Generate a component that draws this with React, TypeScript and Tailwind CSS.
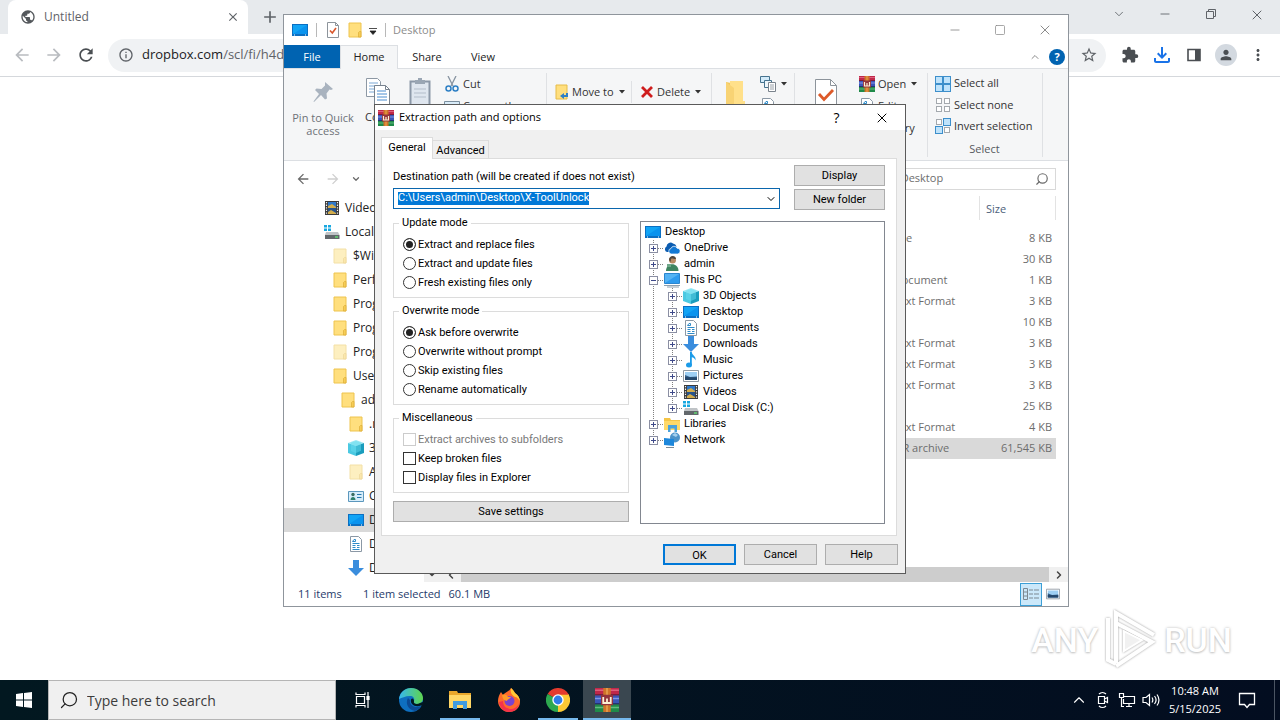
import type { ReactNode } from "react";
import { useState } from "react";
import { ChevronDown, ChevronUp, Minus, Search, Square, X } from "lucide-react";
import {
  MdAdd,
  MdArrowBack,
  MdArrowForward,
  MdClose,
  MdExtension,
  MdInfoOutline,
  MdMoreVert,
  MdOutlineFileDownload,
  MdPerson,
  MdPublic,
  MdRefresh,
  MdStarBorder,
} from "react-icons/md";

type IconName =
  | "screen"
  | "folder"
  | "folderFaded"
  | "video"
  | "disk"
  | "cube"
  | "contact"
  | "document"
  | "download"
  | "music"
  | "picture"
  | "cloud"
  | "user"
  | "pc"
  | "libraries"
  | "network"
  | "winrar"
  | "properties";

const ICONS: Record<IconName, ReactNode> = {
  screen: (
    <>
      <path d="M0 2h16v12H0z" fill="#0b6fc2" />
      <path d="M1 3h14v9H1z" fill="#12a4f5" />
      <path d="M1 12L15 3v9z" fill="#0a93ee" />
      <path d="M2 13h1M13 13h1" stroke="#fff" />
    </>
  ),
  folder: (
    <>
      <path d="M2 1h12v14H2z" fill="#ffdf7e" stroke="#eec44f" />
      <path d="M11.500 15V10.500l1-1h1.500V15z" fill="#f6cd55" stroke="#dcae3a" strokeWidth=".7" />
    </>
  ),
  folderFaded: (
    <>
      <path d="M2 1h12v14H2z" fill="#fdefc0" stroke="#f3e0a6" />
      <path d="M11.500 15V10.500l1-1h1.500V15z" fill="#fbe7ac" stroke="#ecd79b" strokeWidth=".7" />
    </>
  ),
  video: (
    <>
      <path d="M1 1h14v14H1z" fill="#3b3b3b" />
      <path d="M4 2h8v6H4z" fill="#2f78c9" />
      <path d="M4 8h8v6H4z" fill="#27538c" />
      <path d="M4 6l4-2 4 3v1H4zM4 12l3-2 5 3v1H4z" fill="#d3ad4c" />
      <path d="M2.500 2v13M13.500 2v13" stroke="#f2f2f2" strokeWidth="1.200" strokeDasharray="1.300 1.300" />
    </>
  ),
  disk: (
    <>
      <path d="M0 1h3v2.500H0zM4 1h3v2.500H4zM0 4.500h3V7H0zM4 4.500h3V7H4z" fill="#19a8e0" />
      <path d="M2 8h12l1.500 3H1z" fill="#bfc3c6" />
      <path d="M1 11h14.500v4H1z" fill="#62676b" />
      <path d="M11 13h3" stroke="#5ff072" strokeWidth="1.200" />
    </>
  ),
  cube: (
    <>
      <path d="M8 0l8 3-8 3-8-3z" fill="#9be9f5" />
      <path d="M0 3l8 3v10l-8-3z" fill="#4bc9e2" />
      <path d="M16 3L8 6v10l8-3z" fill="#1a9dbd" />
      <path d="M3 2.800L8 1l5 1.800v8L8 13l-5-2z" fill="#68dbee" opacity=".5" />
    </>
  ),
  contact: (
    <>
      <path d="M.5 3.500h15v10H.5z" fill="#d7edfa" stroke="#5b97bd" />
      <circle cx="5" cy="6.500" r="1.700" fill="#3a6c60" />
      <path d="M2.500 12c0-4 5-4 5 0z" fill="#2f7f6c" />
      <path d="M9 6.500h4.500M9 9.500h4.500" stroke="#2878ad" />
    </>
  ),
  document: (
    <>
      <path d="M2.500.5h8l3 3v12h-11z" fill="#fff" stroke="#8b98a5" />
      <path d="M4.500 5.500l1.500-2h1.500v2zM4.500 7.500h7M4.500 9.500h3M9 9.500h2.500M4.500 11.500h3M9 11.500h2.500M4.500 13.500h7" stroke="#2f8bc9" fill="none" />
    </>
  ),
  download: <path d="M5 0h6v8h5l-8 8-8-8h5z" fill="#3a8ddd" />,
  music: (
    <>
      <path d="M7 0h1.800c.2 3.500 4.700 4 3.700 8.500-.6-2-2-3-3.700-3.300V13H7z" fill="#1b9be8" />
      <ellipse cx="6" cy="13" rx="3" ry="2.500" fill="#1b9be8" />
    </>
  ),
  picture: (
    <>
      <path d="M.5 2.500h15v11H.5z" fill="#fff" stroke="#9099a2" />
      <path d="M2 4h12v8H2z" fill="#9ecff3" />
      <path d="M2 7l5 2 7-.5V12H2z" fill="#35618b" />
      <path d="M2 9l12 .5V12H2z" fill="#24476b" />
    </>
  ),
  cloud: (
    <>
      <path d="M3 12A3 3 0 0 1 2.500 6.500 4 4 0 0 1 9 3.500a4 4 0 0 1 3.500 3L6 12z" fill="#0b5cb0" />
      <path d="M7 14a2.800 2.800 0 0 1 0-5.500 3.200 3.200 0 0 1 6-.3A2.900 2.900 0 0 1 13.500 14z" fill="#1479d4" stroke="#fff" strokeWidth=".7" />
    </>
  ),
  user: (
    <>
      <circle cx="8.500" cy="4" r="3.500" fill="#b98a62" />
      <path d="M5 4c0-5 7-5 7-1-3 0-4-1-5 0l-.5 3z" fill="#51463c" />
      <path d="M2 15c0-9 12.500-9 12.500 0z" fill="#3f8560" />
      <path d="M3 8h4v3H3z" fill="#70a98a" />
    </>
  ),
  pc: (
    <>
      <path d="M.5 1.500h15v10H.5z" fill="#53b3f4" stroke="#2a85cf" />
      <path d="M1 11L15 2v9z" fill="#2e9bee" />
      <path d="M3 15h12M0 13.500h16" stroke="#8fa0ae" />
    </>
  ),
  libraries: (
    <>
      <path d="M0 2h6l1 2h9v10H0z" fill="#f5c546" />
      <path d="M0 5h16v9H0z" fill="#ffd968" />
      <path d="M4 16V9h9v7h-2.500v-3.500h-4V16z" fill="#4ba3dc" />
    </>
  ),
  network: (
    <>
      <circle cx="11" cy="5.500" r="5" fill="#4c93c9" />
      <path d="M8 3l3-2 3 2-2 2-2-1z" fill="#a3d0ee" />
      <path d="M0 6l10 1v7L0 13z" fill="#1d87db" />
      <path d="M2 15.500h8" stroke="#7c8a96" />
    </>
  ),
  winrar: (
    <>
      <path d="M0 0h16v5H0z" fill="#c0284a" />
      <path d="M0 1h16v1H0z" fill="#de5f7c" />
      <path d="M0 4h16v1H0z" fill="#7c1b3a" />
      <path d="M0 5h16v5.500H0z" fill="#3a55b8" />
      <path d="M0 6.500h16v1H0z" fill="#8296e6" />
      <path d="M0 10h16v1H0z" fill="#243374" />
      <path d="M0 11h16v5H0z" fill="#1f8a49" />
      <path d="M0 12.500h16v1H0z" fill="#62bb80" />
      <path d="M5.500 0h5v16h-5z" fill="#cf7429" />
      <path d="M7.500 0h1v16h-1z" fill="#e9a552" />
      <path d="M4 4.500h8v7H4z" fill="#93343c" />
      <path d="M5.500 6v4h5V6M8 7v3" stroke="#fdf0d2" fill="none" strokeWidth="1.200" />
    </>
  ),
  properties: (
    <>
      <path d="M2.500.5h8l3 3v12h-11z" fill="#fff" stroke="#8d949b" />
      <path d="M10.500.5v3h3" fill="none" stroke="#8d949b" />
      <path d="M5 8.500l2.300 2.500L11 6" fill="none" stroke="#d9572c" strokeWidth="1.600" />
    </>
  ),
};

function Icon({ name, className = "size-4" }: { name: IconName; className?: string }) {
  return (
    <svg viewBox="0 0 16 16" className={`shrink-0 ${className}`} aria-hidden="true">
      {ICONS[name]}
    </svg>
  );
}

function Caret() {
  return (
    <svg viewBox="0 0 6 4" className="h-1 w-1.5 shrink-0" aria-hidden="true">
      <path d="M0 0h6L3 3.500z" fill="#333" />
    </svg>
  );
}

function SelectGridIcon({ filled }: { filled: boolean[] }) {
  return (
    <svg viewBox="0 0 16 16" className="size-4 shrink-0" aria-hidden="true">
      {filled.map((on, index) => {
        const x = (index % 2) * 8;
        const y = Math.floor(index / 2) * 8;
        return (
          <rect
            key={index}
            x={on ? x + 0.5 : x + 1.5}
            y={on ? y + 0.5 : y + 1.5}
            width={on ? 7 : 5}
            height={on ? 7 : 5}
            fill={on ? "#bfe3fb" : "#fff"}
            stroke={on ? "#3d8fcb" : "#a4a9ae"}
          />
        );
      })}
    </svg>
  );
}

function BrowserWindow() {
  return (
    <section className="flex flex-1 flex-col bg-white" aria-label="Browser">
      <div className="flex h-[34px] bg-[#e7eaed] pl-2">
        <div className="flex w-60 items-center rounded-t-lg bg-white pr-1 pl-3">
          <MdPublic className="size-4 text-[#54585c]" />
          <span className="ml-2 flex-1 text-xs text-[#5f6368]">Untitled</span>
          <button aria-label="Close tab" className="p-1">
            <MdClose className="size-3.5 text-[#5f6368]" />
          </button>
        </div>
        <button aria-label="New tab" className="ml-3">
          <MdAdd className="size-5 text-[#5f6368]" />
        </button>
        <div className="ml-auto flex items-start pt-[7px] text-[#5f6368]">
          <button aria-label="Search tabs" className="flex w-[46px] justify-center">
            <ChevronDown className="size-3.5" strokeWidth={1.5} />
          </button>
          <button aria-label="Minimize" className="flex w-[46px] justify-center">
            <Minus className="size-3.5" strokeWidth={1.5} />
          </button>
          <button aria-label="Restore" className="flex w-[46px] justify-center">
            <svg viewBox="0 0 14 14" className="size-3.5" fill="none" stroke="currentColor">
              <path d="M2.500 4.500h7v7h-7zM4.500 4V2.500h7v7H10" />
            </svg>
          </button>
          <button aria-label="Close" className="flex w-[46px] justify-center">
            <X className="size-4" strokeWidth={1.5} />
          </button>
        </div>
      </div>
      <div className="flex h-[43px] items-center border-b border-[#d5d8dc] pr-1.5">
        <div className="flex w-[108px] gap-3 pl-3">
          <button aria-label="Back">
            <MdArrowBack className="size-5 text-[#b9bcc0]" />
          </button>
          <button aria-label="Forward">
            <MdArrowForward className="size-5 text-[#b9bcc0]" />
          </button>
          <button aria-label="Reload">
            <MdRefresh className="size-5 text-[#4a4e52]" />
          </button>
        </div>
        <div className="flex h-[33px] flex-1 items-center rounded-full bg-[#f0f2f4] pr-2 pl-2.5">
          <MdInfoOutline className="size-4 text-[#5f6368]" />
          <span className="ml-2 text-[13px] text-[#5f6368]">
            <span className="text-[#202124]">dropbox.com</span>/scl/fi/h4d
          </span>
          <button aria-label="Bookmark" className="ml-auto">
            <MdStarBorder className="size-[18px] text-[#5f6368]" />
          </button>
        </div>
        <div className="ml-2 flex text-[#4a4e52]">
          <button aria-label="Extensions" className="flex size-8 items-center justify-center">
            <MdExtension className="size-[18px]" />
          </button>
          <button aria-label="Downloads" className="flex size-8 items-center justify-center">
            <MdOutlineFileDownload className="size-6 text-[#1a73e8]" />
          </button>
          <button aria-label="Side panel" className="flex size-8 items-center justify-center">
            <svg viewBox="0 0 16 16" className="size-4">
              <path d="M2 2.500h12v11H2z" fill="none" stroke="currentColor" strokeWidth="1.600" />
              <path d="M9 3h5v10H9z" fill="currentColor" />
            </svg>
          </button>
          <button aria-label="Profile" className="flex size-8 items-center justify-center">
            <span className="flex size-[22px] items-center justify-center rounded-full bg-[#d3d9e0]">
              <MdPerson className="size-4" />
            </span>
          </button>
          <button aria-label="Menu" className="flex size-8 items-center justify-center">
            <MdMoreVert className="size-[18px]" />
          </button>
        </div>
      </div>
      <div className="flex flex-1 items-end justify-end pr-12 pb-2">
        <Watermark />
      </div>
    </section>
  );
}

function Watermark() {
  return (
    <div className="flex items-center gap-1 font-['Roboto','Liberation_Sans',sans-serif] text-[34px] leading-[64px] font-medium text-white [text-shadow:0_0_3px_#bdbdbd,0_1px_2px_#cfcfcf]">
      <span>ANY</span>
      <svg viewBox="0 0 58 64" className="h-16 w-[58px] drop-shadow-[0_0_1px_#9a9a9a]" fill="none" stroke="#fff" strokeWidth="4" aria-hidden="true">
        <path d="M6 10v42l8 4" />
        <path d="M52 27L14 5v50" />
        <path d="M14 15l36 19-36 24" />
        <path d="M22 23v20l18-11z" fill="#f1f1f1" strokeWidth="2" />
      </svg>
      <span>RUN</span>
    </div>
  );
}

interface NavEntry {
  icon: IconName;
  label: string;
  indent: string;
  selected?: boolean;
}

const NAV_ENTRIES: NavEntry[] = [
  { icon: "video", label: "Videos", indent: "pl-10" },
  { icon: "disk", label: "Local Disk (C:)", indent: "pl-10" },
  { icon: "folderFaded", label: "$WinREAgent", indent: "pl-12" },
  { icon: "folder", label: "PerfLogs", indent: "pl-12" },
  { icon: "folder", label: "Program Files", indent: "pl-12" },
  { icon: "folder", label: "Program Files", indent: "pl-12" },
  { icon: "folderFaded", label: "ProgramData", indent: "pl-12" },
  { icon: "folder", label: "Users", indent: "pl-12" },
  { icon: "folder", label: "admin", indent: "pl-14" },
  { icon: "folder", label: ".ms-ad", indent: "pl-16" },
  { icon: "cube", label: "3D Objects", indent: "pl-16" },
  { icon: "folderFaded", label: "AppData", indent: "pl-16" },
  { icon: "contact", label: "Contacts", indent: "pl-16" },
  { icon: "screen", label: "Desktop", indent: "pl-16", selected: true },
  { icon: "document", label: "Documents", indent: "pl-16" },
  { icon: "download", label: "Downloads", indent: "pl-16" },
];

const FILES = [
  { type: "PNG File", size: "8 KB" },
  { type: "File", size: "30 KB" },
  { type: "Text Document", size: "1 KB" },
  { type: "Rich Text Format", size: "3 KB" },
  { type: "File", size: "10 KB" },
  { type: "Rich Text Format", size: "3 KB" },
  { type: "Rich Text Format", size: "3 KB" },
  { type: "Rich Text Format", size: "3 KB" },
  { type: "File", size: "25 KB" },
  { type: "Rich Text Format", size: "4 KB" },
  { type: "WinRAR archive", size: "61,545 KB", selected: true },
];

function RibbonRow({ icon, label, caret }: { icon: ReactNode; label: string; caret?: boolean }) {
  return (
    <button className="flex h-[22px] items-center gap-[3px] whitespace-nowrap">
      {icon}
      {label}
      {caret && (
        <span className="ml-0.5">
          <Caret />
        </span>
      )}
    </button>
  );
}

function Ribbon() {
  return (
    <div className="flex h-[93px] border-y border-[#dcdfe3] bg-[#f5f6f7] pt-1 pb-[3px] text-[#333]">
      <div className="flex w-[263px] border-r border-[#dfe1e4]">
        <button className="flex w-[78px] flex-col items-center leading-[13px] text-[#6e7278]">
          <svg viewBox="0 0 24 24" className="mt-[7px] mb-[7px] size-6" aria-hidden="true">
            <path d="M14 2l8 7-2 1-1.500-.5-3 4 .5 5-2 1-4-4.500L3 22l-.5-.5L8 14 4 10l1.500-1.500 5 .5L14 5.500z" fill="#a9b3bf" />
          </svg>
          Pin to Quick
          <br />
          access
        </button>
        <button className="flex w-8 flex-col items-center">
          <svg viewBox="0 0 26 28" className="mt-1 mb-1 h-7 w-[26px]" aria-hidden="true">
            <path d="M1.500 1.500h11l3 3v15h-14z" fill="#fff" stroke="#8d98a4" />
            <path d="M4 6h9M4 9h9M4 12h9M4 15h5" stroke="#7aa7d4" />
            <path d="M9.500 8.500h11l4 4v15h-15z" fill="#fff" stroke="#77828e" />
            <path d="M20.500 8.500v4h4" fill="none" stroke="#77828e" />
            <path d="M12 14h9M12 17h10M12 20h10M12 23h10" stroke="#4a8dd0" />
          </svg>
          Copy
        </button>
        <button aria-label="Paste" className="flex w-[52px] justify-center">
          <svg viewBox="0 0 22 30" className="mt-1 h-[30px] w-[22px]" aria-hidden="true">
            <path d="M1.500 4.500h19v25h-19z" fill="#dfe6ef" stroke="#8c98a8" strokeWidth="2" />
            <path d="M6 3h3V1h4v2h3v4H6z" fill="#9aa6b4" />
            <path d="M5 12h12M5 16h12M5 20h12" stroke="#b3bdca" />
          </svg>
        </button>
        <div className="-ml-0.5 flex flex-col">
          <RibbonRow
            label="Cut"
            icon={
              <svg viewBox="0 0 16 16" className="size-4" fill="none" aria-hidden="true">
                <path d="M4 0l5 10M12 0L7 10" stroke="#8793a0" strokeWidth="1.300" />
                <circle cx="4.500" cy="12.500" r="2.500" stroke="#2d7fc4" strokeWidth="1.500" />
                <circle cx="11.500" cy="12.500" r="2.500" stroke="#2d7fc4" strokeWidth="1.500" />
              </svg>
            }
          />
          <RibbonRow
            label="Copy path"
            icon={
              <svg viewBox="0 0 16 16" className="size-4" aria-hidden="true">
                <path d="M.5 3.500h15v9H.5z" fill="#d9ecf9" stroke="#7b8f9f" />
                <path d="M3 8h8" stroke="#3b82bd" />
              </svg>
            }
          />
        </div>
      </div>
      <div className="flex w-[165px] items-start border-r border-[#dfe1e4] pt-2">
        <div className="flex w-[85px] justify-between border-r border-[#dfe1e4] pl-2">
          <RibbonRow
            label="Move to"
            caret
            icon={
              <svg viewBox="0 0 14 16" className="h-4 w-3.5" aria-hidden="true">
                <path d="M1 1h11v14H1z" fill="#ffdf7e" stroke="#e6bc48" />
                <path d="M13 9v4H9v2l-4-3 4-3v2h2V9z" fill="#2f80c8" />
              </svg>
            }
          />
        </div>
        <div className="pl-2">
          <RibbonRow
            label="Delete"
            caret
            icon={
              <svg viewBox="0 0 14 14" className="size-3.5" aria-hidden="true">
                <path d="M2 2l10 10M12 2L2 12" stroke="#cf1d1d" strokeWidth="2.800" />
              </svg>
            }
          />
        </div>
      </div>
      <div className="flex w-[83px] items-start gap-[14px] border-r border-[#dfe1e4] pl-3">
        <svg viewBox="0 0 22 30" className="mt-1.5 h-[30px] w-[22px]" aria-hidden="true">
          <path d="M2 3l10 2v25H2z" fill="#f3c95c" />
          <path d="M6 2h13v20h2v8H6z" fill="#ffe08a" />
          <path d="M2 3l8 6v21H2z" fill="#f8d374" />
        </svg>
        <div className="flex flex-col">
          <RibbonRow
            label=""
            caret
            icon={
              <svg viewBox="0 0 16 16" className="size-4" aria-hidden="true">
                <path d="M.5.5h9v6h-9z" fill="#d3ebfa" stroke="#46738f" />
                <path d="M4.500 4.500h7v7h-7z" fill="#eef6fb" stroke="#46738f" />
                <path d="M8.500 6.500h7v9h-7z" fill="#fff" stroke="#7a838c" />
                <path d="M10 9h4M10 11h4M10 13h4" stroke="#9aa2aa" />
              </svg>
            }
          />
          <RibbonRow label="" caret icon={<Icon name="document" />} />
        </div>
      </div>
      <div className="flex w-[133px] items-start border-r border-[#dfe1e4]">
        <svg viewBox="0 0 22 30" className="mt-1.5 ml-5 h-[30px] w-[22px]" aria-hidden="true">
          <path d="M.5.5h15l6 6v23H.5z" fill="#fff" stroke="#8d949b" />
          <path d="M15.500.5v6h6" fill="none" stroke="#8d949b" />
          <path d="M4 15l5 5.500L18 11" fill="none" stroke="#dd5a29" strokeWidth="2.800" />
        </svg>
        <div className="ml-[22px] flex flex-col">
          <RibbonRow label="Open" caret icon={<Icon name="winrar" />} />
          <RibbonRow label="Edit" icon={<Icon name="document" />} />
          <RibbonRow label="History" icon={<Icon name="document" />} />
        </div>
      </div>
      <div className="flex w-[115px] flex-col border-r border-[#dfe1e4] pl-[7px]">
        <RibbonRow label="Select all" icon={<SelectGridIcon filled={[true, true, true, true]} />} />
        <RibbonRow label="Select none" icon={<SelectGridIcon filled={[false, false, false, false]} />} />
        <RibbonRow label="Invert selection" icon={<SelectGridIcon filled={[false, true, true, false]} />} />
        <span className="mt-1 pr-2 text-center leading-4 text-[#55595e]">Select</span>
      </div>
    </div>
  );
}

function FileTable() {
  return (
    <table className="ml-1 w-[calc(100%-16px)] table-fixed border-collapse text-left text-[#6d6d6d]">
      <thead>
        <tr className="h-8 align-top text-[#4c607a]">
          <th className="font-normal" aria-label="Name" />
          <th className="w-40 font-normal" aria-label="Date modified" />
          <th className="w-[110px] font-normal" aria-label="Type" />
          <th className="w-[77px] font-normal">
            <div className="h-6 border-x border-[#e3e3e3] pl-1.5 leading-[26px]">Size</div>
          </th>
        </tr>
      </thead>
      <tbody>
        {FILES.map((file, index) => (
          <tr key={index} className={file.selected ? "h-[21px] bg-[#d9d9d9]" : "h-[21px]"}>
            <td />
            <td />
            <td className="p-0 whitespace-nowrap">{file.type}</td>
            <td className="p-0 pr-1 text-right whitespace-nowrap">{file.size}</td>
          </tr>
        ))}
      </tbody>
    </table>
  );
}

function ExplorerWindow() {
  return (
    <section
      className="absolute top-3.5 left-[283px] flex w-[786px] flex-col border border-[#8f959c] bg-white text-[11px] text-[#222]"
      aria-label="File Explorer"
    >
      <header className="flex h-[30px] items-center pl-2 text-[#8b8b8b]">
        <Icon name="screen" />
        <span className="ml-2 h-3.5 border-l border-[#b8b8b8]" />
        <Icon name="properties" className="ml-2 size-4" />
        <Icon name="folder" className="ml-1.5 size-4" />
        <svg viewBox="0 0 8 8" className="mt-1 ml-1.5 size-2" aria-hidden="true">
          <path d="M0 .5h8M1 3h6L4 6.500z" fill="#222" stroke="#222" strokeWidth=".8" />
        </svg>
        <span className="ml-2 h-3.5 border-l border-[#b8b8b8]" />
        <h1 className="ml-[7px] flex-1 font-normal">Desktop</h1>
        <button aria-label="Minimize" className="flex w-[45px] justify-center">
          <Minus className="size-3.5" strokeWidth={1.5} />
        </button>
        <button aria-label="Maximize" className="flex w-[45px] justify-center">
          <Square className="size-3" strokeWidth={1.5} />
        </button>
        <button aria-label="Close" className="flex w-[46px] justify-center">
          <X className="size-4" strokeWidth={1.5} />
        </button>
      </header>
      <nav className="flex h-[23px] items-center">
        <button className="h-full w-14 bg-[#0063b1] pt-px text-white">File</button>
        <button className="relative h-6 w-[58px] self-start border border-b-0 border-[#dcdfe3] bg-[#f5f6f7]">Home</button>
        <button className="w-[58px] pt-px">Share</button>
        <button className="w-[54px] pt-px">View</button>
        <button aria-label="Collapse ribbon" className="ml-auto">
          <ChevronUp className="size-3 text-[#8b8b8b]" strokeWidth={2} />
        </button>
        <button aria-label="Help" className="mr-[3px] ml-2 size-4 rounded-full bg-[#0063b1] text-[11px] leading-4 font-bold text-white">
          ?
        </button>
      </nav>
      <Ribbon />
      <div className="flex h-[35px] items-center pr-3 pl-[11px] text-[#6a6a6a]">
        <button aria-label="Back">
          <MdArrowBack className="size-4" />
        </button>
        <button aria-label="Forward" className="ml-3.5">
          <MdArrowForward className="size-4 text-[#cfcfcf]" />
        </button>
        <button aria-label="Recent locations" className="ml-2.5">
          <ChevronDown className="size-2.5" strokeWidth={3} />
        </button>
        <button aria-label="Up" className="ml-2.5">
          <MdArrowBack className="size-4 rotate-90" />
        </button>
        <label className="ml-auto flex h-[22px] w-[218px] items-center border border-[#d9d9d9] pr-1.5 pl-6">
          <input
            aria-label="Search Desktop"
            placeholder="Search Desktop"
            className="min-w-0 flex-1 outline-none placeholder:text-[#6d6d6d]"
          />
          <Search className="size-3.5 -scale-x-100" strokeWidth={2} />
        </label>
      </div>
      <div className="flex h-[386px]">
        <ul className="w-[140px] overflow-hidden">
          {NAV_ENTRIES.map((entry, index) => (
            <li
              key={index}
              className={[
                "flex h-6 items-center gap-[5px] text-xs whitespace-nowrap",
                entry.indent,
                entry.selected ? "bg-[#d9d9d9]" : "",
              ].join(" ")}
            >
              <Icon name={entry.icon} />
              {entry.label}
            </li>
          ))}
        </ul>
        <div className="flex w-4 items-end justify-center bg-[#f0f0f0] pb-0.5">
          <ChevronDown className="size-3 text-[#444]" strokeWidth={3} />
        </div>
        <div className="flex flex-1 flex-col">
          <FileTable />
          <div className="mt-auto flex h-[15px] items-center bg-[#f0f0f0]">
            <button aria-label="Scroll left" className="flex w-[21px] justify-center">
              <ChevronDown className="size-3 rotate-90 text-[#444]" strokeWidth={3} />
            </button>
            <span className="h-full flex-1 bg-[#cdcdcd]" />
            <button aria-label="Scroll right" className="flex w-[19px] justify-center">
              <ChevronDown className="size-3 -rotate-90 text-[#444]" strokeWidth={3} />
            </button>
          </div>
        </div>
      </div>
      <footer className="flex h-6 items-center pr-2 pl-3.5 text-[#1e3a6a]">
        <span className="w-[65px]">11 items</span>
        <span>1 item selected</span>
        <span className="ml-2">60.1 MB</span>
        <button aria-label="Details view" className="ml-auto flex h-[23px] w-[22px] items-center justify-center border border-[#3c9fd6] bg-[#cbe8fa]">
          <svg viewBox="0 0 16 14" className="h-3.5 w-4" fill="none" aria-hidden="true">
            <path d="M.5 1.500h4v11h-4zM.5 5h4M.5 9h4" stroke="#7d8891" />
            <path d="M6 3h4M6 7h4M6 11h4M11 3h5M11 7h5M11 11h5" stroke="#7d8891" />
          </svg>
        </button>
        <button aria-label="Large icons view" className="ml-1">
          <Icon name="picture" className="size-3.5" />
        </button>
      </footer>
    </section>
  );
}

interface TreeEntry {
  icon: IconName;
  label: string;
  depth: number;
  open?: boolean;
  last?: boolean;
}

const TREE: TreeEntry[] = [
  { icon: "cloud", label: "OneDrive", depth: 1 },
  { icon: "user", label: "admin", depth: 1 },
  { icon: "pc", label: "This PC", depth: 1, open: true },
  { icon: "cube", label: "3D Objects", depth: 2 },
  { icon: "screen", label: "Desktop", depth: 2 },
  { icon: "document", label: "Documents", depth: 2 },
  { icon: "download", label: "Downloads", depth: 2 },
  { icon: "music", label: "Music", depth: 2 },
  { icon: "picture", label: "Pictures", depth: 2 },
  { icon: "video", label: "Videos", depth: 2 },
  { icon: "disk", label: "Local Disk (C:)", depth: 2, last: true },
  { icon: "libraries", label: "Libraries", depth: 1 },
  { icon: "network", label: "Network", depth: 1, last: true },
];

function TreeBranch({ node, open, last }: { node?: boolean; open?: boolean; last?: boolean }) {
  return (
    <svg viewBox="0 0 19 16" className="h-4 w-[19px] shrink-0" fill="none" aria-hidden="true">
      <path d={last ? "M8.500 0v8" : "M8.500 0v16"} stroke="#808080" strokeDasharray="1 1" />
      {node && (
        <>
          <path d="M9 8.500h10" stroke="#808080" strokeDasharray="1 1" />
          <rect x="4.500" y="4.500" width="8" height="8" fill="#fff" stroke="#8b8fa3" />
          <path d={open ? "M6 8.500h5" : "M6 8.500h5M8.500 6v5"} stroke="#3f4a8a" />
        </>
      )}
    </svg>
  );
}

function FolderTree() {
  return (
    <ul className="flex-1 border border-[#828790] bg-white py-0.5 pl-1">
      <li className="flex h-4 items-center gap-1">
        <Icon name="screen" />
        Desktop
      </li>
      {TREE.map((entry, index) => (
        <li key={index} className="flex h-4 items-center">
          {entry.depth === 2 && <TreeBranch />}
          <TreeBranch node open={entry.open} last={entry.last} />
          <Icon name={entry.icon} />
          <span className="ml-1">{entry.label}</span>
        </li>
      ))}
    </ul>
  );
}

function OptionGroup({ title, children }: { title: string; children: ReactNode }) {
  return (
    <fieldset className="border border-[#dcdcdc] pb-1 pl-[9px]">
      <legend className="-ml-1 px-[3px] leading-[14px]">{title}</legend>
      <div className="flex flex-col pt-[5px] pb-px">{children}</div>
    </fieldset>
  );
}

function RadioGroup({ title, name, options }: { title: string; name: string; options: string[] }) {
  const [selected, setSelected] = useState(options[0]);

  return (
    <OptionGroup title={title}>
      {options.map((option) => (
        <label key={option} className="flex h-[19px] items-center gap-0.5">
          <input
            type="radio"
            name={name}
            checked={selected === option}
            onChange={() => setSelected(option)}
            className="size-[13px] appearance-none rounded-full border border-[#333] bg-white checked:bg-[#222] checked:shadow-[inset_0_0_0_2px_#fff]"
          />
          <span className="pt-0.5">{option}</span>
        </label>
      ))}
    </OptionGroup>
  );
}

function CheckOption({ label, disabled }: { label: string; disabled?: boolean }) {
  return (
    <label className={disabled ? "flex h-[19px] items-center gap-0.5 text-[#7a7a7a]" : "flex h-[19px] items-center gap-0.5"}>
      <input
        type="checkbox"
        disabled={disabled}
        className="size-[13px] appearance-none border border-[#333] bg-white checked:bg-[#333] disabled:border-[#cccccc]"
      />
      <span className="pt-0.5">{label}</span>
    </label>
  );
}

function PushButton({ children, className = "" }: { children: ReactNode; className?: string }) {
  return (
    <button className={`h-[21px] border border-[#adadad] bg-[#e1e1e1] pt-0.5 ${className}`}>{children}</button>
  );
}

function ExtractionDialog() {
  return (
    <section
      role="dialog"
      aria-label="Extraction path and options"
      className="absolute top-[104px] left-[374px] flex w-[532px] flex-col border border-[#5a5a5a] bg-[#f0f0f0] font-['Roboto','Liberation_Sans',sans-serif] text-[11px] text-black"
    >
      <header className="flex h-[25px] items-center bg-white pl-[3px] font-['Open_Sans','Noto_Sans',sans-serif]">
        <Icon name="winrar" />
        <h2 className="ml-[5px] flex-1">Extraction path and options</h2>
        <button aria-label="Help" className="w-[45px] text-sm">
          ?
        </button>
        <button aria-label="Close" className="flex w-[46px] justify-center">
          <X className="size-4" strokeWidth={1.5} />
        </button>
      </header>
      <div className="flex flex-col px-1.5 pt-[7px] pb-2">
        <div role="tablist" className="flex items-end">
          <button role="tab" aria-selected="true" className="relative -mb-px h-[22px] w-[52px] border border-b-0 border-[#dcdcdc] bg-white">
            General
          </button>
          <button role="tab" aria-selected="false" className="h-[18px] w-14 border border-b-0 border-l-0 border-[#dcdcdc] pt-0.5">
            Advanced
          </button>
        </div>
        <div className="mr-0.5 flex flex-col border border-[#dcdcdc] bg-white px-[11px] pt-1.5 pb-[11px]">
          <div className="flex gap-3.5">
            <div className="flex flex-1 flex-col">
              <label htmlFor="destination" className="pt-0.5 pb-0.5 leading-[19px]">
                Destination path (will be created if does not exist)
              </label>
              <div className="flex h-[21px] items-center border border-[#0a66ad] pr-0.5 pl-1">
                <input
                  id="destination"
                  defaultValue="C:\Users\admin\Desktop\X-ToolUnlock"
                  className="h-[13px] [field-sizing:content] bg-[#0078d7] text-white outline-none"
                />
                <button aria-label="Show recent paths" className="ml-auto">
                  <ChevronDown className="size-3" strokeWidth={2} />
                </button>
              </div>
            </div>
            <div className="flex w-[91px] flex-col gap-[3px]">
              <PushButton>Display</PushButton>
              <PushButton>New folder</PushButton>
            </div>
          </div>
          <div className="mt-1.5 flex gap-[11px]">
            <div className="flex w-[236px] flex-col gap-1.5 pb-0.5">
              <RadioGroup
                title="Update mode"
                name="update"
                options={["Extract and replace files", "Extract and update files", "Fresh existing files only"]}
              />
              <RadioGroup
                title="Overwrite mode"
                name="overwrite"
                options={["Ask before overwrite", "Overwrite without prompt", "Skip existing files", "Rename automatically"]}
              />
              <OptionGroup title="Miscellaneous">
                <CheckOption label="Extract archives to subfolders" disabled />
                <CheckOption label="Keep broken files" />
                <CheckOption label="Display files in Explorer" />
              </OptionGroup>
              <PushButton className="mt-0.5">Save settings</PushButton>
            </div>
            <div className="flex flex-1 pt-[5px]">
              <FolderTree />
            </div>
          </div>
        </div>
        <div className="mt-2 flex justify-end gap-2 pr-px">
          <button className="h-[21px] w-[73px] border-2 border-[#0078d7] bg-[#e1e1e1] pt-0.5">OK</button>
          <PushButton className="w-[73px]">Cancel</PushButton>
          <PushButton className="w-[73px]">Help</PushButton>
        </div>
      </div>
    </section>
  );
}

function TaskbarApp({ label, running, active, children }: { label: string; running?: boolean; active?: boolean; children: ReactNode }) {
  return (
    <button
      aria-label={label}
      className={[
        "flex h-full w-12 flex-col items-center justify-center pt-0.5",
        active ? "bg-[#3a4750]" : "",
      ].join(" ")}
    >
      <span className="flex flex-1 items-center">{children}</span>
      <span
        className={[
          "h-0.5",
          active ? "w-full" : "w-10",
          running ? "bg-[#76b9ed]" : "",
        ].join(" ")}
      />
    </button>
  );
}

function Taskbar() {
  return (
    <footer className="flex h-10 items-center bg-linear-to-r from-[#021820] to-[#030d20] text-white">
      <button aria-label="Start" className="flex w-12 justify-center">
        <svg viewBox="0 0 16 16" className="size-4" fill="#fff" aria-hidden="true">
          <path d="M0 2l7-1v6.500H0zM8 1l8-1v7.500H8zM0 8.500h7V15l-7-1zM8 8.500h8V16l-8-1z" />
        </svg>
      </button>
      <label className="flex h-full w-72 items-center border border-[#b5b5b5] bg-[#f0f0f0] px-2.5">
        <Search className="size-5 -scale-x-100 text-[#222]" strokeWidth={1.5} />
        <input
          aria-label="Type here to search"
          placeholder="Type here to search"
          className="ml-2 flex-1 pt-px text-sm outline-none placeholder:text-[#3c3c3c]"
        />
      </label>
      <div className="flex h-full gap-px pl-0.5">
        <TaskbarApp label="Task view">
          <svg viewBox="0 0 18 18" className="size-[18px]" fill="none" stroke="#fff" strokeWidth="1.200" aria-hidden="true">
            <path d="M3.500 5.500h8v7h-8zM3 1.500v2h9v-2M3 16.500v-2h9v2M15 1v16" />
            <path d="M14 5.500h2v3h-2z" fill="#fff" />
          </svg>
        </TaskbarApp>
        <TaskbarApp label="Edge">
          <svg viewBox="0 0 24 24" className="size-6" aria-hidden="true">
            <defs>
              <linearGradient id="edgeTop" x1="0" x2="1">
                <stop offset="0" stopColor="#36b8ef" />
                <stop offset="1" stopColor="#5fd44d" />
              </linearGradient>
            </defs>
            <circle cx="12" cy="12" r="12" fill="#0e6fc0" />
            <path d="M0 11C1 4 6 0 12 0c7 0 12 5 12 10 0 4-3 6-6 6s-4-1-3-3c1-3-1-5-4-5-5 0-8 2-11 3z" fill="url(#edgeTop)" />
            <path d="M9 10c-3 5 0 12 7 13 3-1 5-3 6-5-6 3-12-1-11-6z" fill="#0b4a94" />
            <path d="M15 13c-1 3 3 4 6 2l3-1v4l-2-.5c-6 2-11-1-10-6 1-2 3-1 3 1.500z" fill="#021820" />
          </svg>
        </TaskbarApp>
        <TaskbarApp label="File Explorer" running>
          <svg viewBox="0 0 22 20" className="h-5 w-[22px]" aria-hidden="true">
            <path d="M0 1h8l1 2h13v15H0z" fill="#e9a72b" />
            <path d="M0 5h22v13H0z" fill="#ffd766" />
            <path d="M4 19v-8h14v8h-4v-4H8v4z" fill="#3f9be0" />
          </svg>
        </TaskbarApp>
        <TaskbarApp label="Firefox">
          <svg viewBox="0 0 24 24" className="size-6" aria-hidden="true">
            <path d="M14 0c2 2 3 3 4 5 3 2 5 5 5 9 0 6-5 10-11 10S1 19 1 13c0-3 1-6 3-9l2 3c2-3 6-3 8-7z" fill="#ff6a2b" />
            <path d="M14 0c2 2 3 3 4 5 3 2 5 5 5 9-1-3-3-5-5-5-3-2-5-4-4-9z" fill="#ffc935" />
            <path d="M2 14c1 6 5 10 10 10s9-3 10-8c-3 5-8 6-12 4-3-1-4-4-4-7z" fill="#f5314b" />
            <circle cx="12.500" cy="13" r="5" fill="#7a43cf" />
            <path d="M5 7c3-1 5 0 6 2h3c-1 2-4 2-4 4-2-1-4 0-5-6z" fill="#ff9a29" />
          </svg>
        </TaskbarApp>
        <TaskbarApp label="Chrome" running>
          <svg viewBox="0 0 24 24" className="size-6" aria-hidden="true">
            <path d="M12 12L1.600 6A12 12 0 0 1 22.400 6z" fill="#e33b2e" />
            <path d="M12 12L22.400 6A12 12 0 0 1 12 24z" fill="#fcc934" />
            <path d="M12 12v12A12 12 0 0 1 1.600 6z" fill="#2da94f" />
            <path d="M12 6.500h10.600l-5.800 8.300z" fill="#fcc934" />
            <path d="M12 6.500H22.600L22.400 6 12 4z" fill="#e33b2e" />
            <circle cx="12" cy="12" r="5.700" fill="#fff" />
            <circle cx="12" cy="12" r="4.400" fill="#2f7de9" />
          </svg>
        </TaskbarApp>
        <TaskbarApp label="WinRAR" running active>
          <Icon name="winrar" className="size-6" />
        </TaskbarApp>
      </div>
      <div className="ml-auto flex h-full items-center">
        <button aria-label="Show hidden icons" className="flex w-6 justify-center">
          <ChevronUp className="size-[18px]" strokeWidth={1.5} />
        </button>
        <button aria-label="Meet now" className="flex w-6 justify-center">
          <svg viewBox="0 0 16 18" className="h-[18px] w-4" fill="none" stroke="#fff" strokeWidth="1.200" aria-hidden="true">
            <path d="M3.500 5.500h6v7h-6zM9.500 8l3-1.500v5l-3-1.500M4 3c2-2 5-2 7 0M4 15c2 2 5 2 7 0" />
          </svg>
        </button>
        <button aria-label="Network" className="flex w-6 justify-center">
          <svg viewBox="0 0 18 16" className="h-4 w-[18px]" fill="none" stroke="#fff" strokeWidth="1.200" aria-hidden="true">
            <path d="M6 4.500h10.500v7H5.500V7M1.500 1.500h4v4h-4zM3.500 6v8.500H6M11 12v2M8 14.500h6" />
          </svg>
        </button>
        <button aria-label="Volume" className="flex w-6 justify-center">
          <svg viewBox="0 0 18 16" className="h-4 w-[18px]" fill="none" stroke="#fff" strokeWidth="1.200" aria-hidden="true">
            <path d="M1 5.500h3l3.500-3v11L4 10.500H1zM10 5.500c1 1.500 1 3.500 0 5M12.500 4c2 2.500 2 5.500 0 8M15 2.500c2.500 3.500 2.500 7.500 0 11" />
          </svg>
        </button>
        <div className="w-16 text-center text-[11px] leading-[18px] whitespace-nowrap">
          <div>10:48 AM</div>
          <div>5/15/2025</div>
        </div>
        <button aria-label="Notifications" className="mr-[7px] flex w-10 justify-center">
          <svg viewBox="0 0 18 18" className="size-[18px]" fill="none" stroke="#fff" strokeWidth="1.300" aria-hidden="true">
            <path d="M1.500 2.500h15v11h-5L9 16.500l-2.500-3h-5z" />
          </svg>
        </button>
        <span className="h-full w-1.5 border-l border-[#4b5563]" />
      </div>
    </footer>
  );
}

function App() {
  return (
    <main className="relative flex min-h-screen flex-col overflow-hidden bg-white font-['Open_Sans','Noto_Sans',sans-serif]">
      <BrowserWindow />
      <ExplorerWindow />
      <ExtractionDialog />
      <Taskbar />
    </main>
  );
}

export default App;
